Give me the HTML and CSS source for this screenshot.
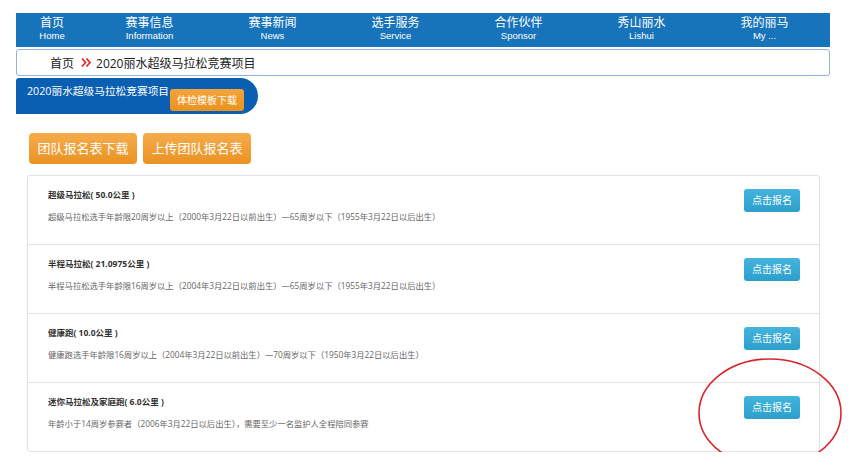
FILE: index.html
```html
<!DOCTYPE html>
<html lang="zh-CN">
<head>
  <meta charset="UTF-8">
  <title>2020丽水超级马拉松竞赛项目</title>
  <link rel="stylesheet" href="styles.css">
</head>
<body>
  <div class="page">
    <div class="nav">
      <a class="nav-item first"><b>首页</b><span>Home</span></a>
      <a class="nav-item"><b>赛事信息</b><span>Information</span></a>
      <a class="nav-item"><b>赛事新闻</b><span>News</span></a>
      <a class="nav-item"><b>选手服务</b><span>Service</span></a>
      <a class="nav-item"><b>合作伙伴</b><span>Sponsor</span></a>
      <a class="nav-item"><b>秀山丽水</b><span>Lishui</span></a>
      <a class="nav-item"><b>我的丽马</b><span>My ...</span></a>
    </div>

    <div class="crumb">
      <span class="crumb-home">首页</span>
      <svg class="crumb-arrow" width="11" height="11" viewBox="0 0 11 11">
        <path d="M1 1.5 L4.5 5.5 L1 9.5" fill="none" stroke="#e02b2b" stroke-width="1.8"/>
        <path d="M5.5 1.5 L9 5.5 L5.5 9.5" fill="none" stroke="#e02b2b" stroke-width="1.8"/>
      </svg>
      <span>2020丽水超级马拉松竞赛项目</span>
    </div>

    <div class="tab">
      <span class="tab-title">2020丽水超级马拉松竞赛项目</span>
      <a class="btn-small">体检模板下载</a>
    </div>

    <div class="actions">
      <a class="btn-orange">团队报名表下载</a>
      <a class="btn-orange">上传团队报名表</a>
    </div>

    <div class="panel">
      <div class="row">
        <div class="row-text">
          <div class="row-title">超级马拉松( 50.0公里 )</div>
          <div class="row-desc">超级马拉松选手年龄限20周岁以上（2000年3月22日以前出生）—65周岁以下（1955年3月22日以后出生）</div>
        </div>
        <a class="btn-blue">点击报名</a>
      </div>
      <div class="row">
        <div class="row-text">
          <div class="row-title">半程马拉松( 21.0975公里 )</div>
          <div class="row-desc">半程马拉松选手年龄限16周岁以上（2004年3月22日以前出生）—65周岁以下（1955年3月22日以后出生）</div>
        </div>
        <a class="btn-blue">点击报名</a>
      </div>
      <div class="row">
        <div class="row-text">
          <div class="row-title">健康跑( 10.0公里 )</div>
          <div class="row-desc">健康跑选手年龄限16周岁以上（2004年3月22日以前出生）—70周岁以下（1950年3月22日以后出生）</div>
        </div>
        <a class="btn-blue">点击报名</a>
      </div>
      <div class="row">
        <div class="row-text">
          <div class="row-title">迷你马拉松及家庭跑( 6.0公里 )</div>
          <div class="row-desc">年龄小于14周岁参赛者（2006年3月22日以后出生），需要至少一名监护人全程陪同参赛</div>
        </div>
        <a class="btn-blue">点击报名</a>
      </div>
    </div>

    <svg class="mark" width="146" height="112" viewBox="0 0 146 112">
      <ellipse cx="73" cy="56" rx="71" ry="54" fill="none" stroke="#d9232a" stroke-width="1.6"/>
    </svg>
  </div>
</body>
</html>
```

FILE: styles.css
```css
body {
  margin: 0;
  background: #fff;
  font-family: "Open Sans", "Noto Sans CJK SC", sans-serif;
  color: #222;
}
.page {
  position: relative;
  padding: 13px 35px 0 16px;
}
.nav {
  display: flex;
  height: 34px;
  background: #1874ba;
}
.nav-item {
  width: 123px;
  display: flex;
  flex-direction: column;
  align-items: center;
  padding-top: 3px;
  color: #fff;
  font-family: "Liberation Sans", "Noto Sans CJK SC", sans-serif;
}
.nav-item.first {
  width: 72px;
}
.nav-item b {
  font-weight: normal;
  font-size: 12px;
  line-height: 14px;
}
.nav-item span {
  font-size: 9.5px;
  line-height: 11px;
}
.crumb {
  display: flex;
  align-items: center;
  height: 25px;
  margin-top: 2px;
  padding-left: 33px;
  border: 1px solid #8fb2e0;
  border-radius: 3px;
  font-size: 12px;
}
.crumb-home {
  margin-right: 7px;
}
.crumb-arrow {
  margin-right: 4px;
}
.tab {
  display: flex;
  align-items: center;
  width: 231px;
  height: 36px;
  margin-top: 2px;
  padding-left: 11px;
  background: #0b5fb3;
  border-radius: 3px 18px 18px 0;
  color: #fff;
  font-size: 10.7px;
  white-space: nowrap;
}
.tab-title {
  margin-top: -11px;
}
.btn-small {
  flex-shrink: 0;
  margin: 8px 0 0 1px;
  width: 74px;
  height: 22px;
  line-height: 22px;
  text-align: center;
  background: linear-gradient(#f5a43a, #e9921f);
  border-radius: 3px;
  font-size: 10px;
}
.actions {
  display: flex;
  gap: 6px;
  margin: 19px 0 11px 13px;
}
.btn-orange {
  width: 108px;
  height: 31px;
  line-height: 31px;
  text-align: center;
  background: linear-gradient(#f6ac4b, #ea9223);
  border-radius: 4px;
  color: #fff;
  font-size: 13px;
}
.panel {
  margin-left: 11px;
  margin-right: 10px;
  border: 1px solid #e2e2e2;
  border-radius: 3px;
  box-shadow: 0 2px 3px rgba(0, 0, 0, 0.05);
}
.row {
  display: flex;
  justify-content: space-between;
  height: 68px;
  padding: 0 19px 0 20px;
  border-top: 1px solid #e2e2e2;
}
.row:first-child {
  border-top: none;
}
.row-title {
  margin-top: 12px;
  font-size: 8.5px;
  font-weight: bold;
  color: #333;
}
.row-desc {
  margin-top: 10px;
  font-size: 8.3px;
  color: #666;
}
.btn-blue {
  margin-top: 13px;
  width: 56px;
  height: 23px;
  line-height: 23px;
  text-align: center;
  background: linear-gradient(#43b4dd, #2c9fcc);
  border-radius: 3px;
  color: #fff;
  font-size: 10px;
}
.mark {
  position: absolute;
  left: 697px;
  top: 357px;
}
```
